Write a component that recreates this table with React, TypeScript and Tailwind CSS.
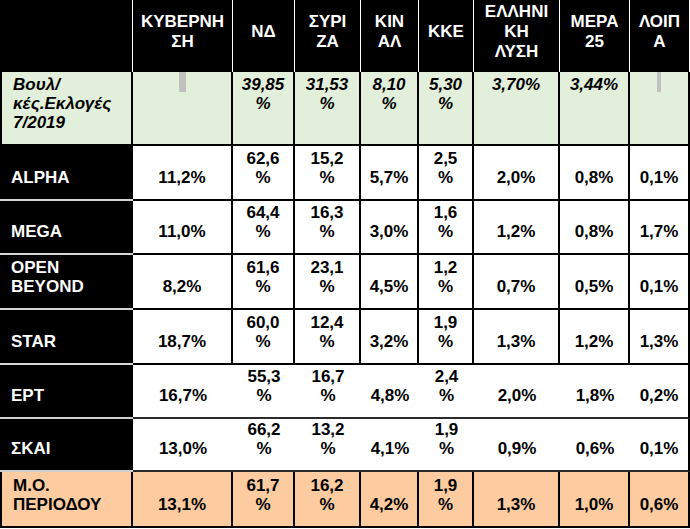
import React from "react";

type Variant = "data" | "open" | "avg";

const cols = "grid grid-cols-[133px_100px_62px_66px_58px_55px_86px_70px_60px]";

const header = ["ΚΥΒΕΡΝΗ\nΣΗ", "ΝΔ", "ΣΥΡΙ\nΖΑ", "ΚΙΝ\nΑΛ", "ΚΚΕ", "ΕΛΛΗΝΙ\nΚΗ\nΛΥΣΗ", "ΜΕΡΑ\n25", "ΛΟΙΠ\nΑ"];

const elections = ["", "39,85\n%", "31,53\n%", "8,10\n%", "5,30\n%", "3,70%", "3,44%", ""];

const rows: { name: string; h: string; variant: Variant; vals: string[] }[] = [
  { name: "ALPHA", h: "h-[55px]", variant: "data", vals: ["11,2%", "62,6\n%", "15,2\n%", "5,7%", "2,5\n%", "2,0%", "0,8%", "0,1%"] },
  { name: "MEGA", h: "h-[54px]", variant: "data", vals: ["11,0%", "64,4\n%", "16,3\n%", "3,0%", "1,6\n%", "1,2%", "0,8%", "1,7%"] },
  { name: "OPEN\nBEYOND", h: "h-[55px]", variant: "data", vals: ["8,2%", "61,6\n%", "23,1\n%", "4,5%", "1,2\n%", "0,7%", "0,5%", "0,1%"] },
  { name: "STAR", h: "h-[55px]", variant: "data", vals: ["18,7%", "60,0\n%", "12,4\n%", "3,2%", "1,9\n%", "1,3%", "1,2%", "1,3%"] },
  { name: "ΕΡΤ", h: "h-[54px]", variant: "open", vals: ["16,7%", "55,3\n%", "16,7\n%", "4,8%", "2,4\n%", "2,0%", "1,8%", "0,2%"] },
  { name: "ΣΚΑΙ", h: "h-[53px]", variant: "open", vals: ["13,0%", "66,2\n%", "13,2\n%", "4,1%", "1,9\n%", "0,9%", "0,6%", "0,1%"] },
  { name: "Μ.Ο.\nΠΕΡΙΟΔΟΥ", h: "h-[56px]", variant: "avg", vals: ["13,1%", "61,7\n%", "16,2\n%", "4,2%", "1,9\n%", "1,3%", "1,0%", "0,6%"] },
];

function PollRow({ name, h, variant, vals }: { name: string; h: string; variant: Variant; vals: string[] }) {
  const first =
    variant === "avg"
      ? "bg-[#fccb9f] text-black border-l-2 border-r-2 border-b-2 border-black"
      : variant === "open"
      ? "bg-black text-white border-b-2 border-[#cfcfcf]"
      : "bg-black text-white border-b-2 border-[#d6d6d6]";

  return (
    <div className={`${cols} ${h}`}>
      <div className={`${first} flex flex-col justify-end pl-[11px] pb-[12px] whitespace-pre-line`}>{name}</div>
      {vals.map((v, i) => {
        const last = i === vals.length - 1;
        const cell =
          variant === "avg"
            ? "bg-[#fccb9f] border-r-2 border-b-2 border-black"
            : variant === "open"
            ? last
              ? "bg-white border-r-2 border-b-2 border-r-black border-b-[#2a2a2a]"
              : "bg-white border-b-2 border-[#2a2a2a]"
            : "bg-white border-r-2 border-b-2 border-black";
        return (
          <div key={i} className={`${cell} flex flex-col justify-end items-center text-center pb-[12px] whitespace-pre-line`}>
            {v}
          </div>
        );
      })}
    </div>
  );
}

export default function App() {
  return (
    <div className="w-[690px] h-[529px] bg-white font-['Liberation_Sans',Arial,sans-serif] font-bold text-[17px] leading-[19px] text-black">
      {/* Header */}
      <div className={`${cols} h-[72px] bg-black text-white leading-[20px]`}>
        <div className="border-r border-white" />
        {header.map((t, i) => (
          <div key={i} className="border-r border-white flex items-center justify-center text-center pb-[9px] whitespace-pre-line">
            {t}
          </div>
        ))}
      </div>

      {/* Parliamentary elections 7/2019 */}
      <div className={`${cols} h-[74px] bg-[#e2efda] italic`}>
        <div className="border-l-2 border-r-2 border-b-2 border-black pl-[11px] pt-[3px] whitespace-pre-line">
          {"Βουλ/\nκές.Εκλογές\n7/2019"}
        </div>
        {elections.map((v, i) => (
          <div key={i} className="border-r-2 border-b-2 border-black text-center whitespace-pre-line">
            {v ? (
              <div className="pt-[3px]">{v}</div>
            ) : (
              <div className={`${i === 0 ? "w-[7px]" : "w-[4px]"} h-[20px] mx-auto bg-[#c0c0c0]`} />
            )}
          </div>
        ))}
      </div>

      {rows.map((r) => (
        <PollRow key={r.name} {...r} />
      ))}
    </div>
  );
}
